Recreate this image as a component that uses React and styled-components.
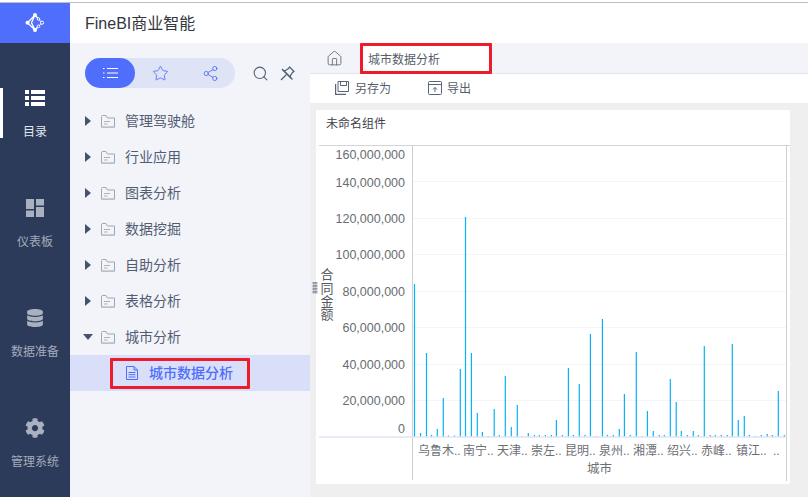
import styled, { createGlobalStyle } from "styled-components";
import { Star, Share2, Search, Home } from "lucide-react";
import { FaCog, FaDatabase } from "react-icons/fa";

const GlobalStyle = createGlobalStyle`
  html, body {
    margin: 0;
    padding: 0;
    background: #fff;
  }
  * {
    box-sizing: border-box;
  }
`;

const Page = styled.div`
  width: 808px;
  height: 497px;
  overflow: hidden;
  display: flex;
  flex-direction: column;
  padding-top: 2px;
  background: #fff;
  font-family: "Liberation Sans", "Noto Sans CJK SC", sans-serif;
`;

const TopLine = styled.div`
  height: 1px;
  flex: none;
  background: #bdbdbd;
`;

const Shell = styled.div`
  flex: 1;
  display: flex;
  min-height: 0;
`;

const Sidebar = styled.nav`
  width: 70px;
  flex: none;
  display: flex;
  flex-direction: column;
  background: #2b3b59;
`;

const Logo = styled.div`
  height: 40px;
  flex: none;
  display: flex;
  align-items: center;
  justify-content: center;
  background: #4f6efb;
`;

const NavList = styled.div`
  display: flex;
  flex-direction: column;
  gap: 60px;
  padding-top: 45px;
`;

const NavItem = styled.div`
  height: 50px;
  display: flex;
  flex-direction: column;
  align-items: center;
  justify-content: space-between;
  border-left: 3px solid ${(p) => (p.$active ? "#fff" : "transparent")};
  padding-right: 3px;
  color: ${(p) => (p.$active ? "#fff" : "#a9b0bf")};
`;

const NavIcon = styled.div`
  height: 20px;
  display: flex;
  align-items: center;
  justify-content: center;
`;

const NavLabel = styled.div`
  font-size: 12px;
  line-height: 18px;
  margin-bottom: -3px;
  color: ${(p) => (p.$active ? "#e4e7ee" : "#a4abbb")};
`;

const Main = styled.div`
  flex: 1;
  display: flex;
  flex-direction: column;
  min-width: 0;
`;

const Header = styled.header`
  height: 40px;
  flex: none;
  display: flex;
  align-items: center;
  padding: 0 0 2px 15px;
  font-size: 16px;
  color: #33363d;
  background: #fff;
`;

const Workspace = styled.div`
  flex: 1;
  display: flex;
  min-height: 0;
`;

const TreePanel = styled.aside`
  width: 240px;
  flex: none;
  background: #f2f4f9;
  padding-top: 15px;
`;

const PanelTools = styled.div`
  display: flex;
  align-items: center;
  height: 30px;
  padding-left: 15px;
`;

const Pill = styled.div`
  width: 150px;
  height: 30px;
  display: flex;
  border-radius: 15px;
  background: #dfe3f6;
`;

const PillTab = styled.div`
  width: 50px;
  display: flex;
  align-items: center;
  justify-content: center;
  border-radius: 15px;
  color: #5877f5;
  background: ${(p) => (p.$active ? "#4f6efb" : "transparent")};
`;

const ToolIcons = styled.div`
  display: flex;
  align-items: center;
  gap: 11px;
  margin-left: 17px;
  color: #545f75;
`;

const Tree = styled.div`
  display: flex;
  flex-direction: column;
  padding-top: 15px;
`;

const TreeRow = styled.div`
  height: 36px;
  display: flex;
  align-items: center;
  gap: 10px;
  padding-left: 15px;
  font-size: 14px;
  color: #525d73;
`;

const TreeLabel = styled.span`
  margin-bottom: 2px;
`;

const Caret = styled.span`
  width: 6px;
  height: 10px;
  flex: none;
  display: flex;
  align-items: center;
  justify-content: center;
  overflow: visible;
`;

const SelectedRow = styled.div`
  height: 36px;
  display: flex;
  align-items: center;
  padding-left: 40px;
  background: #d9dff8;
`;

const Highlight = styled.div`
  width: 140px;
  height: 31px;
  display: flex;
  align-items: center;
  gap: 11px;
  padding-left: 13px;
  border: 3px solid #ec1c2a;
  border-radius: 1px;
  font-size: 14px;
  font-weight: 500;
  color: #4f6efb;
`;

const Content = styled.section`
  flex: 1;
  display: flex;
  flex-direction: column;
  min-width: 0;
  background: #efefef;
`;

const Breadcrumb = styled.div`
  height: 31px;
  flex: none;
  display: flex;
  align-items: center;
  padding-left: 16px;
  gap: 17px;
  background: #f2f4f9;
  border-bottom: 1px solid #e2e4ea;
  color: #5a6477;
`;

const CrumbTab = styled.div`
  width: 132px;
  height: 31px;
  display: flex;
  align-items: center;
  padding-left: 5px;
  border: 3px solid #ec1c2a;
  border-radius: 1px;
  background: #fff;
  font-size: 12px;
  color: #565d6b;
`;

const Toolbar = styled.div`
  height: 29px;
  flex: none;
  display: flex;
  align-items: center;
  gap: 37px;
  padding: 0 0 2px 25px;
  background: #fff;
`;

const ToolButton = styled.div`
  display: flex;
  align-items: center;
  gap: ${(p) => p.$gap || 6}px;
  font-size: 12px;
  color: #565d6b;
`;

const Card = styled.div`
  width: 474px;
  height: 374px;
  flex: none;
  margin: 7px 0 0 6px;
  display: flex;
  flex-direction: column;
  background: #fff;
`;

const CardTitle = styled.div`
  height: 35px;
  flex: none;
  padding: 6px 0 0 10px;
  font-size: 12px;
  line-height: 17px;
  color: #3d4048;
`;

const ChartSvg = styled.svg`
  display: block;
  overflow: visible;
  font-family: "Liberation Sans", "Noto Sans CJK SC", sans-serif;
`;

const AxisTitle = styled.text`
  writing-mode: vertical-rl;
  font-size: 13px;
  letter-spacing: 0.3px;
  fill: #565a62;
`;

const treeItems = ["管理驾驶舱", "行业应用", "图表分析", "数据挖掘", "自助分析", "表格分析"];

// x 位置和柱顶 y 都按页面坐标量的，画的时候减去卡片偏移
const bars = [
  [414.5, 284], [420.5, 433], [426.5, 353], [431.5, 435], [437.3, 429], [443.3, 398], [448.5, 435.5],
  [454.5, 435.5], [460.3, 369], [465.5, 217], [471.4, 353], [477.3, 413], [482.4, 432], [488.3, 436],
  [494.2, 409], [499.4, 435], [505.3, 376], [511.3, 427], [517.3, 405], [522.4, 436], [528.3, 433],
  [534.4, 435], [539.4, 435], [545.4, 435], [551.4, 435], [556.4, 420], [562.4, 435], [568.4, 368],
  [573.4, 435], [579.3, 384], [585, 435], [590.4, 334], [596.5, 436], [602.4, 319], [607.4, 435],
  [613.3, 435], [619.3, 429], [624.4, 394], [630.3, 435], [636.3, 352], [642.3, 436], [647.4, 411],
  [653.3, 431], [659.3, 435], [664.3, 435], [670.3, 379], [676.2, 402], [681.3, 431], [687.3, 435],
  [693.3, 431], [698.3, 435], [704.3, 346], [710.3, 435], [715.3, 435], [721.3, 435], [727.3, 435],
  [732.3, 344], [738.3, 420], [744.3, 416], [749.3, 435], [755.3, 436], [761.3, 435], [767.3, 434],
  [772.3, 435], [778.3, 391], [784.3, 435],
];

const ticks = [
  ["160,000,000", 154, 0],
  ["140,000,000", 182, 181],
  ["120,000,000", 218, 218],
  ["100,000,000", 254, 254],
  ["80,000,000", 291, 291],
  ["60,000,000", 327, 327],
  ["40,000,000", 364, 364],
  ["20,000,000", 400, 400],
  ["0", 428, 0],
];

const cityLabels = [
  ["乌鲁木..", 418], ["南宁..", 463], ["天津..", 497], ["崇左..", 531], ["昆明..", 565],
  ["泉州..", 599], ["湘潭..", 633], ["绍兴..", 667], ["赤峰..", 701], ["镇江..", 736], ["..", 773],
];

const OX = 316;
const OY = 145;

function Chart() {
  return (
    <ChartSvg width="474" height="339" viewBox={`${OX} ${OY} 474 339`}>
      <line x1="319" x2="790" y1="145.5" y2="145.5" stroke="#d4d4d4" />
      {ticks.map(([label, y, grid]) => (
        <g key={label}>
          {grid > 0 && <line x1="413" x2="786" y1={grid + 0.5} y2={grid + 0.5} stroke="#f4f5f8" />}
          <text x="405" y={y + 4.5} fontSize="12.5" textAnchor="end" fill="#686c73">{label}</text>
        </g>
      ))}
      <line x1="412.5" x2="412.5" y1="145" y2="480" stroke="#cfcfcf" />
      <line x1="786.5" x2="786.5" y1="145" y2="481" stroke="#cfcfcf" />
      {bars.map(([x, top]) => (
        <rect key={x} x={x - 0.6} y={top} width="1.2" height={437 - top} fill="#05b2fb" />
      ))}
      <line x1="319" x2="786" y1="437" y2="437" stroke="#e0e3f3" strokeWidth="1.4" />
      <AxisTitle x="326" y="268">合同金额</AxisTitle>
      {[0, 1, 2, 3].map((i) => (
        <g key={i} fill="none" stroke="#7b8296" strokeWidth="0.7">
          <rect x="313" y={282.5 + i * 3} width="1.5" height="1.5" />
          <rect x="315.5" y={282.5 + i * 3} width="1.5" height="1.5" />
        </g>
      ))}
      {cityLabels.map(([label, x]) => (
        <text key={label} x={x} y="454.5" fontSize="12" fill="#6b6e75">{label}</text>
      ))}
      <text x="587" y="472.5" fontSize="12.5" fill="#6b6e75">城市</text>
    </ChartSvg>
  );
}

function LogoMark() {
  return (
    <svg width="22" height="24" viewBox="0 0 22 24" fill="none">
      <path d="M11 4 3.500 11.700 11 19M11 4l3.500 4M11 19l3.500-3.700M11 4l-3.500 7.700L11 19" stroke="#fff" strokeWidth="1.300" />
      <path d="M14.500 8 18 11.700 14.500 15.300" stroke="#fff" strokeWidth="1" />
      <circle cx="11" cy="4" r="2" fill="#fff" />
      <circle cx="3.500" cy="11.700" r="2" fill="#fff" />
      <circle cx="11" cy="19" r="2" fill="#fff" />
      <circle cx="18" cy="11.700" r="1.600" fill="#4f6efb" stroke="#fff" />
      <circle cx="14.500" cy="8" r="1.300" fill="#4f6efb" stroke="#fff" />
      <circle cx="14.500" cy="15.300" r="1.300" fill="#4f6efb" stroke="#fff" />
    </svg>
  );
}

function ListBlocks() {
  return (
    <svg width="20" height="16" viewBox="0 0 20 16" fill="#fff">
      <rect y="0" width="4" height="4" />
      <rect x="6" y="0" width="14" height="4" />
      <rect y="6" width="4" height="4" />
      <rect x="6" y="6" width="14" height="4" />
      <rect y="12" width="4" height="4" />
      <rect x="6" y="12" width="14" height="4" />
    </svg>
  );
}

function DashboardIcon() {
  return (
    <svg width="18" height="18" viewBox="0 0 18 18" fill="#a9b0bf">
      <rect width="8" height="10" />
      <rect y="11.500" width="8" height="6.500" />
      <rect x="10" width="8" height="6.500" />
      <rect x="10" y="8" width="8" height="10" />
    </svg>
  );
}

function ThinList() {
  return (
    <svg width="15" height="12" viewBox="0 0 15 12" stroke="#fff" strokeWidth="1">
      <path d="M0 1.500h1.500M4 1.500h11M0 6h1.500M4 6h11M0 10.500h1.500M4 10.500h11" />
    </svg>
  );
}

function UnpinIcon() {
  return (
    <svg width="15" height="15" viewBox="0 0 15 15" fill="none" stroke="currentColor" strokeWidth="1.200">
      <path d="M9.500 1 14 5.500 12.500 6.500 10.500 9.500 10.500 11.500 3.500 4.500 5.500 4.500 8.500 2.500z" />
      <path d="M6.500 8.500 1 14" />
      <path d="M2 3 12.500 13.500" />
    </svg>
  );
}

function FolderIcon() {
  return (
    <svg width="14" height="13" viewBox="0 0 14 13" fill="none" stroke="#a0a5b3" strokeWidth="1">
      <path d="M.5 12V1.500a1 1 0 0 1 1-1h3.500l1.500 2.500h7v9z" />
      <path d="M.5 12.500h13" stroke="#bcc0ca" />
      <path d="M3 6.500h6M3 9h3.500" stroke="#adb1bd" />
    </svg>
  );
}

function DocIcon() {
  return (
    <svg width="12" height="14" viewBox="0 0 12 14" fill="none" stroke="#4f6efb" strokeWidth="1">
      <path d="M.5.500h7.500l3.500 3.500v9.500h-11z" />
      <path d="M8 .500v3.500h3.500M2.500 6.500h7M2.500 8.700h7M2.500 11h7" />
    </svg>
  );
}

function SaveAsIcon() {
  return (
    <svg width="14" height="14" viewBox="0 0 14 14" fill="none" stroke="#5a6477" strokeWidth="1">
      <path d="M3 .500h10.500v10H3zM5.500.500v4h6v-4" />
      <path d="M.500 3v10.500H11" strokeWidth="1.400" />
    </svg>
  );
}

function ExportIcon() {
  return (
    <svg width="14" height="14" viewBox="0 0 14 14" fill="none" stroke="#5a6477" strokeWidth="1">
      <rect x=".5" y=".5" width="13" height="13" rx="1" />
      <path d="M.5 3.500h13M7 11V6.500M5 8.500l2-2 2 2" />
    </svg>
  );
}

export default function App() {
  return (
    <Page>
      <GlobalStyle />
      <TopLine />
      <Shell>
        <Sidebar>
          <Logo>
            <LogoMark />
          </Logo>
          <NavList>
            <NavItem $active>
              <NavIcon><ListBlocks /></NavIcon>
              <NavLabel $active>目录</NavLabel>
            </NavItem>
            <NavItem>
              <NavIcon><DashboardIcon /></NavIcon>
              <NavLabel>仪表板</NavLabel>
            </NavItem>
            <NavItem>
              <NavIcon><FaDatabase size={18} /></NavIcon>
              <NavLabel>数据准备</NavLabel>
            </NavItem>
            <NavItem>
              <NavIcon><FaCog size={20} /></NavIcon>
              <NavLabel>管理系统</NavLabel>
            </NavItem>
          </NavList>
        </Sidebar>
        <Main>
          <Header>FineBI商业智能</Header>
          <Workspace>
            <TreePanel>
              <PanelTools>
                <Pill>
                  <PillTab $active><ThinList /></PillTab>
                  <PillTab><Star size={17} strokeWidth={1.3} /></PillTab>
                  <PillTab><Share2 size={17} strokeWidth={1.3} /></PillTab>
                </Pill>
                <ToolIcons>
                  <Search size={17} strokeWidth={1.5} />
                  <UnpinIcon />
                </ToolIcons>
              </PanelTools>
              <Tree>
                {treeItems.map((name) => (
                  <TreeRow key={name}>
                    <Caret>
                      <svg width="6" height="10" viewBox="0 0 6 10"><path d="M0 0l6 5-6 5z" fill="#46536f" /></svg>
                    </Caret>
                    <FolderIcon />
                    <TreeLabel>{name}</TreeLabel>
                  </TreeRow>
                ))}
                <TreeRow>
                  <Caret>
                    <svg width="10" height="6" viewBox="0 0 10 6" style={{ flex: "none" }}><path d="M0 0h10L5 6z" fill="#46536f" /></svg>
                  </Caret>
                  <FolderIcon />
                  <TreeLabel>城市分析</TreeLabel>
                </TreeRow>
                <SelectedRow>
                  <Highlight>
                    <DocIcon />
                    <TreeLabel>城市数据分析</TreeLabel>
                  </Highlight>
                </SelectedRow>
              </Tree>
            </TreePanel>
            <Content>
              <Breadcrumb>
                <Home size={17} strokeWidth={1.2} />
                <CrumbTab>城市数据分析</CrumbTab>
              </Breadcrumb>
              <Toolbar>
                <ToolButton><SaveAsIcon />另存为</ToolButton>
                <ToolButton $gap={5}><ExportIcon />导出</ToolButton>
              </Toolbar>
              <Card>
                <CardTitle>未命名组件</CardTitle>
                <Chart />
              </Card>
            </Content>
          </Workspace>
        </Main>
      </Shell>
    </Page>
  );
}
